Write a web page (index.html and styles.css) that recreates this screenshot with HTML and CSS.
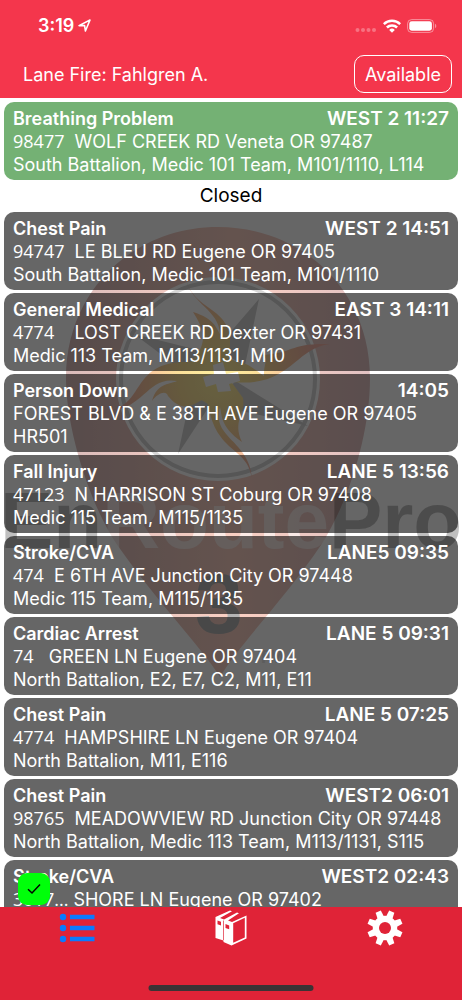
FILE: index.html
```html
<!DOCTYPE html>
<html lang="en">
<head>
  <meta charset="UTF-8">
  <meta name="viewport" content="width=device-width, initial-scale=1.0">
  <title>EnRoutePro</title>
  <link rel="stylesheet" href="styles.css">
</head>
<body>
  <header class="header">
    <div class="status-bar">
      <span class="time">3:19</span>
      <svg class="location" width="13" height="13" viewBox="0 0 13 13"><path d="M1 6.6 12 1 7.4 12 6.6 6.6Z" fill="none" stroke="#fff" stroke-width="1.6" stroke-linejoin="round"/></svg>
      <div class="status-icons">
        <svg width="22" height="6" viewBox="0 0 22 6" fill="#fff" fill-opacity=".3"><circle cx="2.5" cy="3" r="2"/><circle cx="8" cy="3" r="2"/><circle cx="13.5" cy="3" r="2"/><circle cx="19" cy="3" r="2"/></svg>
        <svg width="18" height="14" viewBox="0 0 18 14"><g fill="none" stroke="#fff" stroke-width="2.5"><path d="M.8 5.1a11.6 11.6 0 0 1 16.4 0"/><path d="M3.9 8.5a7.2 7.2 0 0 1 10.200 0"/></g><path d="M9 13.7 6.200 10.900a4 4 0 0 1 5.600 0Z" fill="#fff"/></svg>
        <svg width="30" height="14" viewBox="0 0 30 14"><rect x=".6" y=".6" width="26" height="12.8" rx="4" fill="none" stroke="#fff" stroke-opacity=".45"/><rect x="2.3" y="2.3" width="22.6" height="9.4" rx="2.4" fill="#fff"/><path d="M28 4.8v4.4q1.3-.6 1.300-2.200T28 4.800Z" fill="#fff" fill-opacity=".45"/></svg>
      </div>
    </div>
    <div class="title-bar">
      <h1>Lane Fire: Fahlgren A.</h1>
      <button class="available">Available</button>
    </div>
  </header>

  <main class="calls">
    <svg class="watermark" viewBox="0 0 462 500">
      <defs>
        <linearGradient id="pin">
          <stop offset="0" stop-color="#dabcbb"/>
          <stop offset=".55" stop-color="#fad0c3"/>
          <stop offset="1" stop-color="#e2c2c3"/>
        </linearGradient>
        <radialGradient id="sun" gradientUnits="userSpaceOnUse" cx="218" cy="179" r="100">
          <stop offset="0" stop-color="#fff2a0"/>
          <stop offset=".4" stop-color="#fce09a"/>
          <stop offset=".7" stop-color="#fac9a0"/>
          <stop offset="1" stop-color="#f3b5a8"/>
        </radialGradient>
      </defs>
      <path d="M220 477C204 450 158 403 118 346C92 309 66 232 66 178C66 90 134 27 218 27S370 90 370 178C370 232 350 300 321 345C284 400 238 446 220 477Z" fill="url(#pin)"/>
      <circle cx="218" cy="179" r="102" fill="#fff"/>
      <circle cx="218" cy="179" r="97" fill="none" stroke="#d6d6d6" stroke-width="4"/>
      <g fill="#d2d2d2">
        <path d="M259 99 245 165 215 150Z"/>
        <path d="M134 134 202 151 190 176Z"/>
        <path d="M178 254 190 198 216 196Z"/>
        <path d="M308 226 234 180 228 208Z"/>
      </g>
      <g fill="url(#sun)">
        <path d="M186 80C197 116 238 104 229 158L242 165L210 190L194 158C208 143 204 129 193 112C215 119 216 128 220 134C219 110 192 104 186 80Z"/>
        <path d="M330 144C294 148 291 188 232 182L225 164C245 158 252 168 264 176C263 163 271 157 260 155C297 153 287 143 330 144Z"/>
        <path d="M252 278C247 246 216 254 208 204L195 196L222 169L243 198C246 213 232 221 242 242C219 226 222 213 220 207C211 238 249 240 252 278Z"/>
        <path d="M112 210C145 202 132 160 190 162L209 151L214 187L205 198C188 209 180 210 168 196C166 190 158 193 152 201C157 182 172 184 177 181C148 176 144 208 112 210Z"/>
      </g>
      <path d="M213 165 223 162 226 174 238 172 240 181 229 184 231 191 218 192 216 184 206 187 203 177 214 174Z" fill="#fff"/>
      <text class="brand" x="0" y="348"><tspan fill="#000" fill-opacity=".25">En</tspan><tspan fill="#fff" fill-opacity=".6">Route</tspan><tspan fill="#000" fill-opacity=".25">Pro</tspan></text>
      <text class="number" x="219" y="433" text-anchor="middle">3</text>
      <text class="mark" x="258" y="463">TM</text>
    </svg>

    <article class="call active">
      <div class="call-head"><h2>Breathing Problem</h2><b>WEST 2 11:27</b></div>
      <p><span class="num">98477</span>&nbsp; WOLF CREEK RD Veneta OR 97487</p>
      <p>South Battalion, Medic 101 Team, M101/1110, L114</p>
    </article>

    <div class="section">Closed</div>

    <article class="call">
      <div class="call-head"><h2>Chest Pain</h2><b>WEST 2 14:51</b></div>
      <p><span class="num">94747</span>&nbsp; LE BLEU RD Eugene OR 97405</p>
      <p>South Battalion, Medic 101 Team, M101/1110</p>
    </article>
    <article class="call">
      <div class="call-head"><h2>General Medical</h2><b>EAST 3 14:11</b></div>
      <p><span class="num">4774</span>&nbsp; &nbsp; LOST CREEK RD Dexter OR 97431</p>
      <p>Medic 113 Team, M113/1131, M10</p>
    </article>
    <article class="call">
      <div class="call-head"><h2>Person Down</h2><b>14:05</b></div>
      <p>FOREST BLVD &amp; E 38TH AVE Eugene OR 97405</p>
      <p>HR501</p>
    </article>
    <article class="call">
      <div class="call-head"><h2>Fall Injury</h2><b>LANE 5 13:56</b></div>
      <p><span class="num">47123</span>&nbsp; N HARRISON ST Coburg OR 97408</p>
      <p>Medic 115 Team, M115/1135</p>
    </article>
    <article class="call">
      <div class="call-head"><h2>Stroke/CVA</h2><b>LANE5 09:35</b></div>
      <p><span class="num">474</span>&nbsp; E 6TH AVE Junction City OR 97448</p>
      <p>Medic 115 Team, M115/1135</p>
    </article>
    <article class="call">
      <div class="call-head"><h2>Cardiac Arrest</h2><b>LANE 5 09:31</b></div>
      <p><span class="num">74</span>&nbsp; &nbsp;GREEN LN Eugene OR 97404</p>
      <p>North Battalion, E2, E7, C2, M11, E11</p>
    </article>
    <article class="call">
      <div class="call-head"><h2>Chest Pain</h2><b>LANE 5 07:25</b></div>
      <p><span class="num">4774</span>&nbsp; HAMPSHIRE LN Eugene OR 97404</p>
      <p>North Battalion, M11, E116</p>
    </article>
    <article class="call">
      <div class="call-head"><h2>Chest Pain</h2><b>WEST2 06:01</b></div>
      <p><span class="num">98765</span>&nbsp; MEADOWVIEW RD Junction City OR 97448</p>
      <p>North Battalion, Medic 113 Team, M113/1131, S115</p>
    </article>
    <article class="call">
      <div class="call-head"><h2>Stroke/CVA</h2><b>WEST2 02:43</b></div>
      <p><span class="num">3017...</span> SHORE LN Eugene OR 97402</p>
    </article>

    <button class="check" aria-label="Status OK">
      <svg width="14" height="12" viewBox="0 0 14 12"><path d="M1 6.2 5 10 13 1.5" fill="none" stroke="#000" stroke-width="1.5"/></svg>
    </button>
  </main>

  <nav class="tabs">
    <a href="#calls" aria-label="Calls">
      <svg width="36" height="36" viewBox="0 0 36 36" fill="#0a7bff"><circle cx="4" cy="7" r="3.2"/><circle cx="4" cy="18" r="3.2"/><circle cx="4" cy="29" r="3.2"/><path d="M11 4.8h24.500v4.400H11ZM11 15.800h24.500v4.400H11ZM11 26.800h24.500v4.400H11Z"/></svg>
    </a>
    <a href="#library" aria-label="Library">
      <svg width="36" height="36" viewBox="0 0 36 36">
        <path d="M2.5 7 17 .5 19 1.300 7 8 11 9.500 24 2.500 26 3.300 15 10.500 19 12 33.500 5.500V28.500L18.500 35.500 10.500 32V30.500L2.500 28Z" fill="#fff"/>
        <path d="M20.2 13.200 31.800 7.700V27.500L20.200 32.800Z" fill="#e02337"/>
        <path d="M10.5 10.500V30" stroke="#e02337" stroke-width=".7"/>
        <path d="M4.5 10.500 8 11.800V15.600L4.500 14.300ZM12.500 14 16.200 15.400V19.300L12.500 17.900Z" fill="#e02337"/>
      </svg>
    </a>
    <a href="#settings" aria-label="Settings">
      <svg width="36" height="36" viewBox="0 0 36 36">
        <g fill="#fff" transform="rotate(22.5 18 18)">
          <circle cx="18" cy="18" r="12.2"/>
          <path id="tooth" d="M14.500 8 15.200.3H20.800L21.500 8Z"/>
          <use href="#tooth" transform="rotate(45 18 18)"/>
          <use href="#tooth" transform="rotate(90 18 18)"/>
          <use href="#tooth" transform="rotate(135 18 18)"/>
          <use href="#tooth" transform="rotate(180 18 18)"/>
          <use href="#tooth" transform="rotate(225 18 18)"/>
          <use href="#tooth" transform="rotate(270 18 18)"/>
          <use href="#tooth" transform="rotate(315 18 18)"/>
        </g>
        <circle cx="18" cy="18" r="6" fill="#e02337"/>
      </svg>
    </a>
    <div class="home-indicator"></div>
  </nav>
</body>
</html>
```
FILE: styles.css
```css
:root {
  --header-color: #f4364c;
  --tab-color: #e02337;
  --active-color: #74b174;
  --border-radius: 10px;
}

* {
  box-sizing: border-box;
}

body {
  margin: 0;
  height: 100vh;
  display: flex;
  flex-direction: column;
  overflow: hidden;
  background: white;
  color: white;
  font-family: Inter, "Liberation Sans", sans-serif;
  font-size: 18px;
  line-height: 23px;
}

h1, h2, p {
  margin: 0;
  font-size: inherit;
  white-space: nowrap;
}

button {
  font: inherit;
  color: inherit;
  cursor: pointer;
}

.header {
  background: var(--header-color);
  padding-bottom: 5px;
}

.status-bar {
  display: flex;
  align-items: center;
  padding: 14px 25px 0 38px;
  height: 37px;
}

.time {
  font-weight: 600;
}

.location {
  margin-left: 4px;
}

.status-icons {
  display: flex;
  align-items: flex-end;
  gap: 6px;
  margin-left: auto;
}

.title-bar {
  display: flex;
  justify-content: space-between;
  align-items: center;
  padding: 18px 10px 0 23px;
}

.title-bar h1 {
  font-weight: 400;
}

.available {
  height: 38px;
  padding: 0 10px;
  background: none;
  border: 1px solid white;
  border-radius: var(--border-radius);
}

.calls {
  position: relative;
  flex: 1;
  min-height: 0;
  overflow: hidden;
  padding: 4px 4px 0;
}

.watermark {
  position: absolute;
  top: 102px;
  left: 0;
  width: 100%;
}

.brand {
  font: bold 80px "Liberation Sans", sans-serif;
}

.number {
  font: bold 86px "Liberation Sans", sans-serif;
  fill: #b4b4b4;
}

.mark {
  font: bold 18px "Liberation Sans", sans-serif;
  fill: #e6e6e6;
}

.call {
  position: relative;
  height: 78px;
  margin-bottom: 3px;
  padding: 5px 9px 4px;
  background: rgba(0, 0, 0, 0.6);
  border-radius: var(--border-radius);
}

.call.active {
  background: var(--active-color);
  margin-bottom: 0;
}

.call-head {
  display: flex;
  justify-content: space-between;
}

.call-head h2,
.call-head b {
  font-weight: 600;
}

.call-head b {
  font-size: 19px;
}

.num {
  font-family: "Open Sans", sans-serif;
  line-height: 1;
}

.section {
  padding: 4px 0 5px;
  text-align: center;
  font-size: 19px;
  color: black;
}

.check {
  position: absolute;
  left: 18px;
  bottom: 2px;
  display: flex;
  align-items: center;
  justify-content: center;
  width: 32px;
  height: 32px;
  padding: 0;
  background: #00ff0a;
  border: none;
  border-radius: 9px;
}

.tabs {
  position: relative;
  display: flex;
  height: 93px;
  padding-top: 3px;
  background: var(--tab-color);
}

.tabs a {
  flex: 1;
  text-align: center;
}

.home-indicator {
  position: absolute;
  bottom: 9px;
  left: 50%;
  width: 165px;
  height: 6px;
  transform: translateX(-50%);
  background: #3b3335;
  border-radius: 3px;
}
```
